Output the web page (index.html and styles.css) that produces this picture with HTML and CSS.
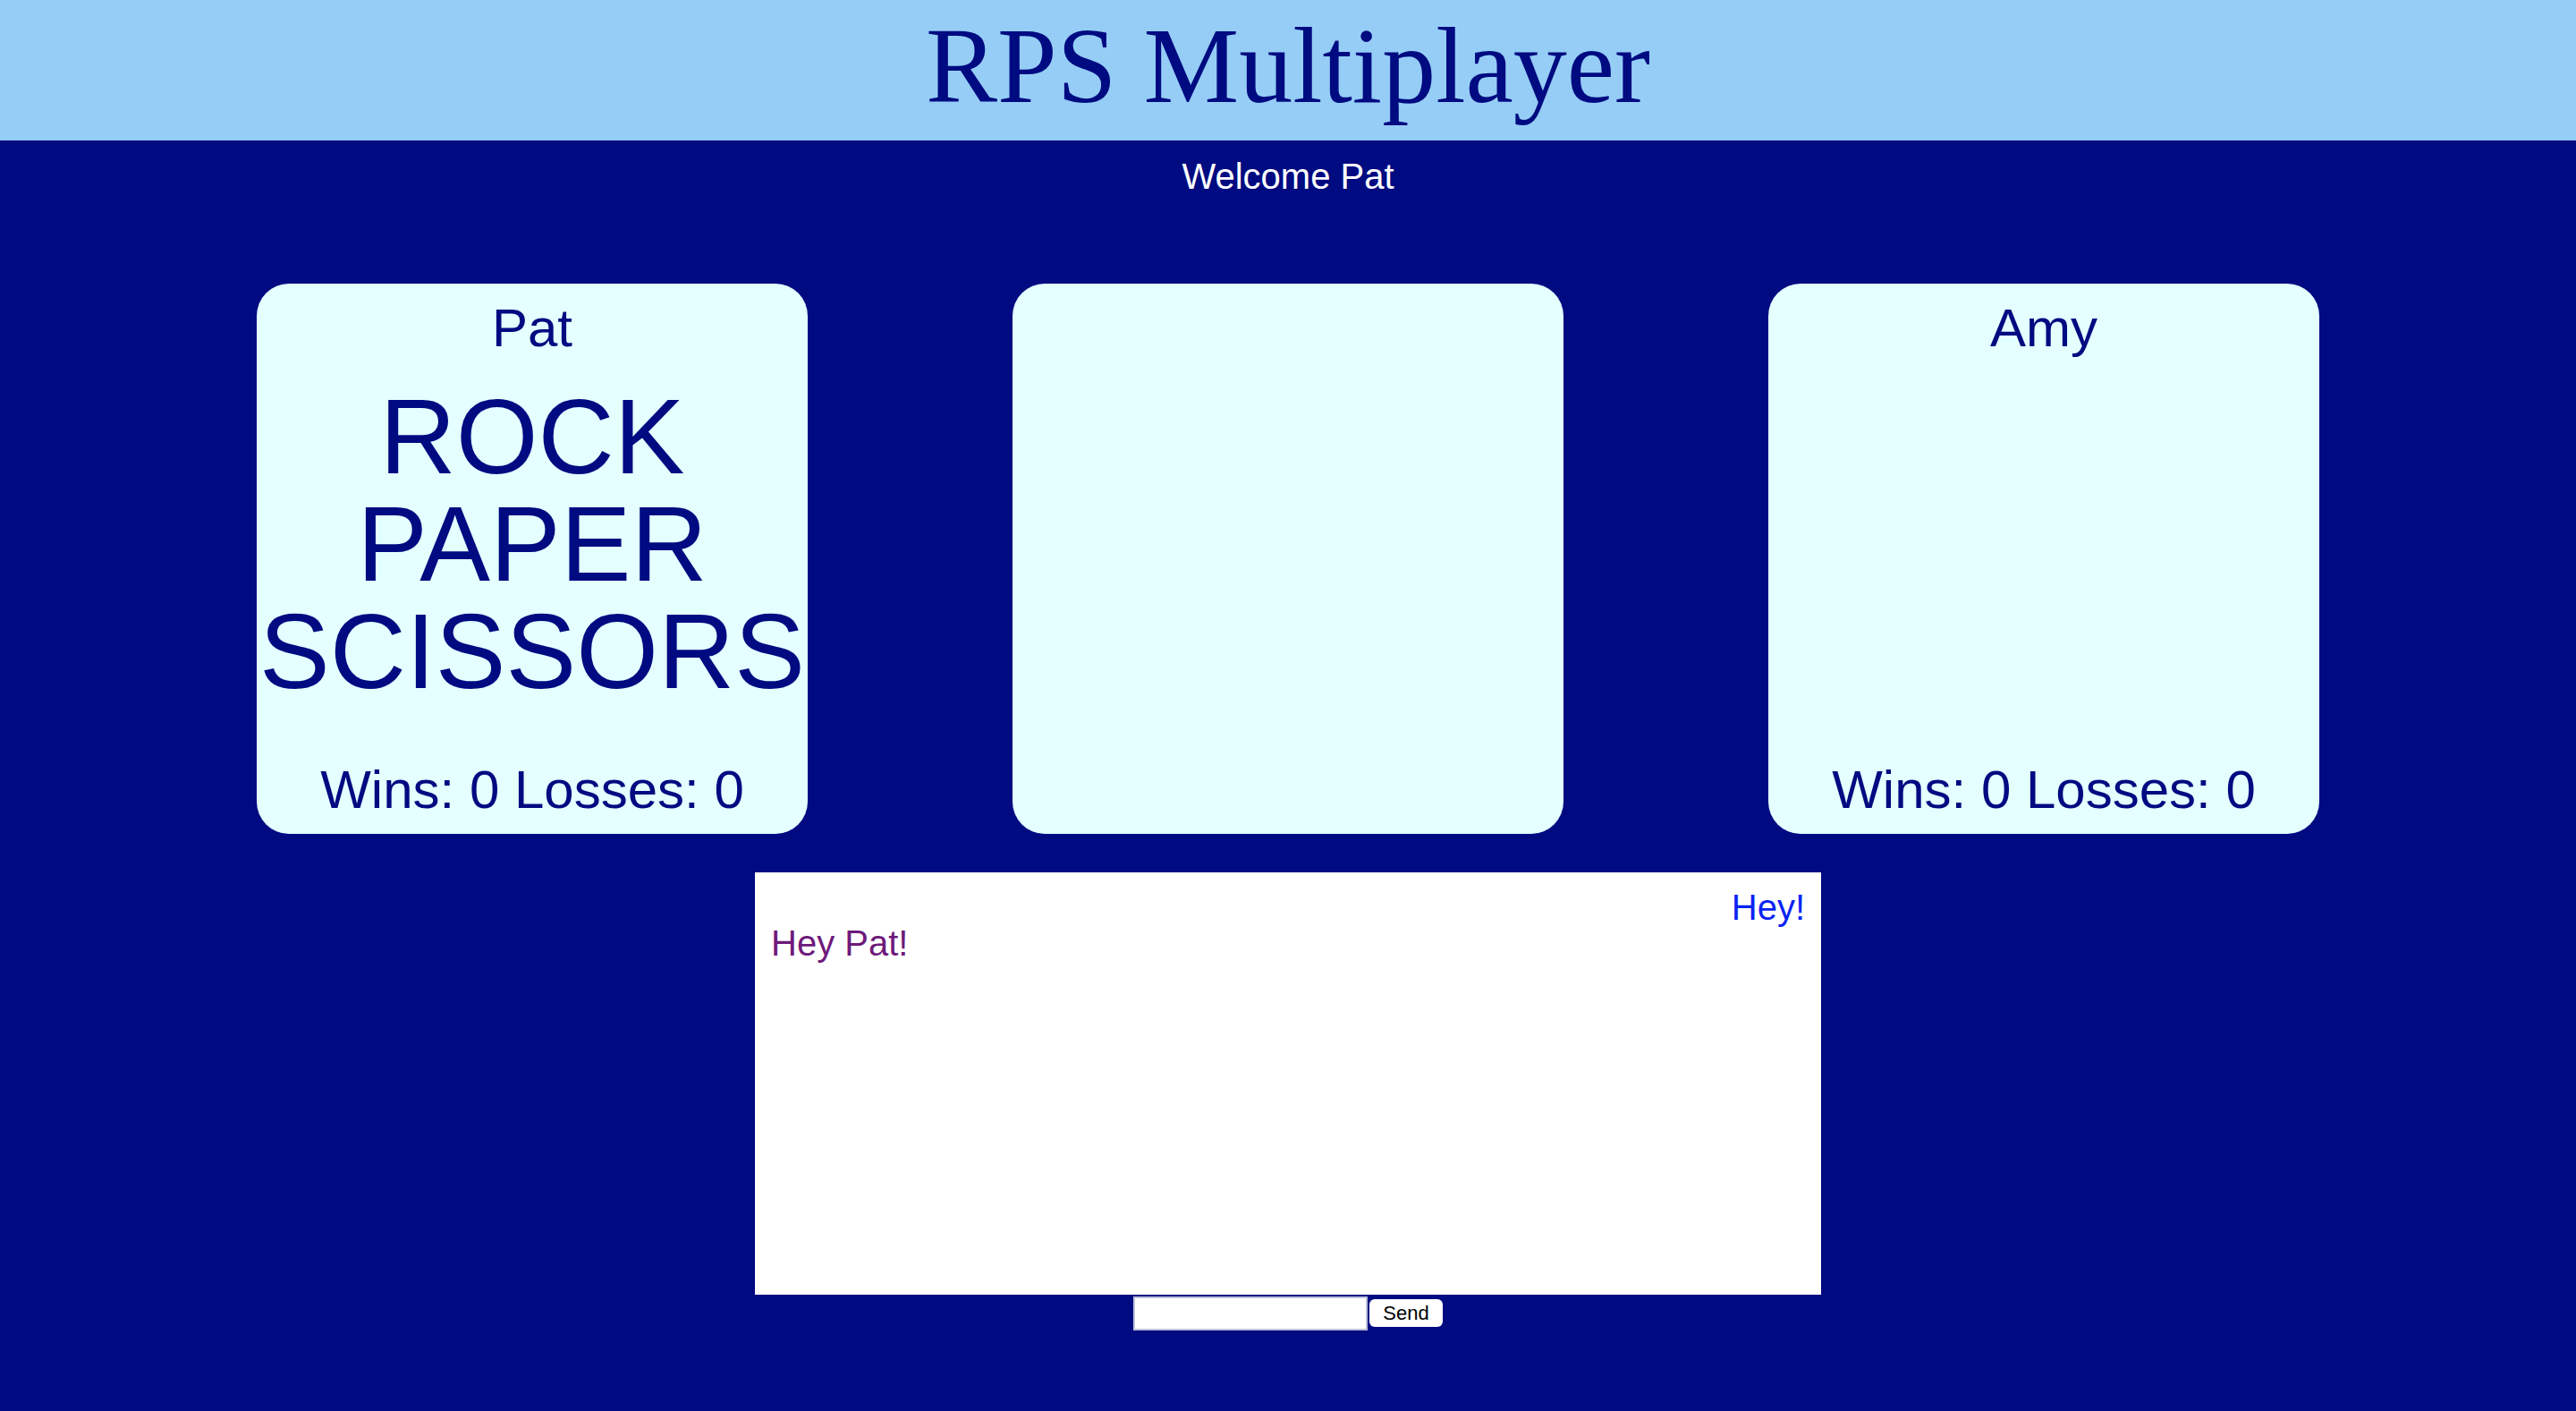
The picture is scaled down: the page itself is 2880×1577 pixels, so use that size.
FILE: index.html
```html
<!DOCTYPE html>
<html lang="en">
<head>
<meta charset="utf-8">
<title>RPS Multiplayer</title>
<link rel="stylesheet" href="styles.css">
</head>
<body>
<header class="top-bar">
  <h1 class="title">RPS Multiplayer</h1>
</header>
<div class="welcome">Welcome Pat</div>
<main class="players">
  <section class="card">
    <div class="name">Pat</div>
    <div class="choices">
      <div>ROCK</div>
      <div>PAPER</div>
      <div>SCISSORS</div>
    </div>
    <div class="record">Wins: 0 Losses: 0</div>
  </section>
  <section class="card"></section>
  <section class="card">
    <div class="name">Amy</div>
    <div class="record">Wins: 0 Losses: 0</div>
  </section>
</main>
<section class="chat">
  <div class="msg mine">Hey!</div>
  <div class="msg theirs">Hey Pat!</div>
</section>
<form class="chat-form">
  <input class="chat-input" type="text">
  <button class="send-btn" type="button">Send</button>
</form>
</body>
</html>
```

FILE: styles.css
```css
html, body {
  margin: 0;
  padding: 0;
}

body {
  background: #000a81;
  font-family: "Liberation Sans", Arial, sans-serif;
  min-height: 1577px;
}

.top-bar {
  height: 157px;
  background: #95cdf6;
  text-align: center;
  box-sizing: border-box;
  padding-top: 5px;
}

.title {
  margin: 0;
  font-family: "Liberation Serif", "Times New Roman", serif;
  font-weight: normal;
  font-size: 120px;
  line-height: 138px;
  color: #000a81;
}

.welcome {
  margin-top: 17px;
  color: #ffffff;
  font-size: 40px;
  line-height: 46px;
  text-align: center;
}

.players {
  display: flex;
  justify-content: center;
  gap: 229px;
  margin-top: 97px;
}

.card {
  width: 616px;
  height: 615px;
  box-sizing: border-box;
  padding: 15px 0;
  background: #e3ffff;
  border-radius: 36px;
  display: flex;
  flex-direction: column;
  align-items: center;
  color: #000a81;
  text-align: center;
}

.name {
  font-size: 60px;
  line-height: 69px;
}

.choices {
  margin-top: 27px;
  font-size: 118px;
  line-height: 120px;
  white-space: nowrap;
}

.record {
  margin-top: auto;
  font-size: 60px;
  line-height: 69px;
  white-space: nowrap;
}

.chat {
  width: 1192px;
  height: 472px;
  box-sizing: border-box;
  margin: 43px auto 0;
  padding: 19px 18px;
  background: #ffffff;
}

.msg {
  font-size: 40px;
  line-height: 40px;
}

.mine {
  text-align: right;
  color: #0a24f2;
}

.theirs {
  text-align: left;
  color: #6e1a7b;
}

.chat-form {
  display: flex;
  justify-content: center;
  align-items: flex-start;
  gap: 2px;
  margin: 2px 0 0;
}

.chat-input {
  width: 262px;
  height: 38px;
  box-sizing: border-box;
  margin: 0;
  border: 2px solid #bfc2d8;
  background: #ffffff;
  padding: 0 4px;
}

.send-btn {
  width: 82px;
  height: 31px;
  margin-top: 3px;
  padding: 0;
  border: none;
  border-radius: 6px;
  background: #ffffff;
  color: #000000;
  font-family: "Liberation Sans", Arial, sans-serif;
  font-size: 22px;
  line-height: 31px;
}
```
